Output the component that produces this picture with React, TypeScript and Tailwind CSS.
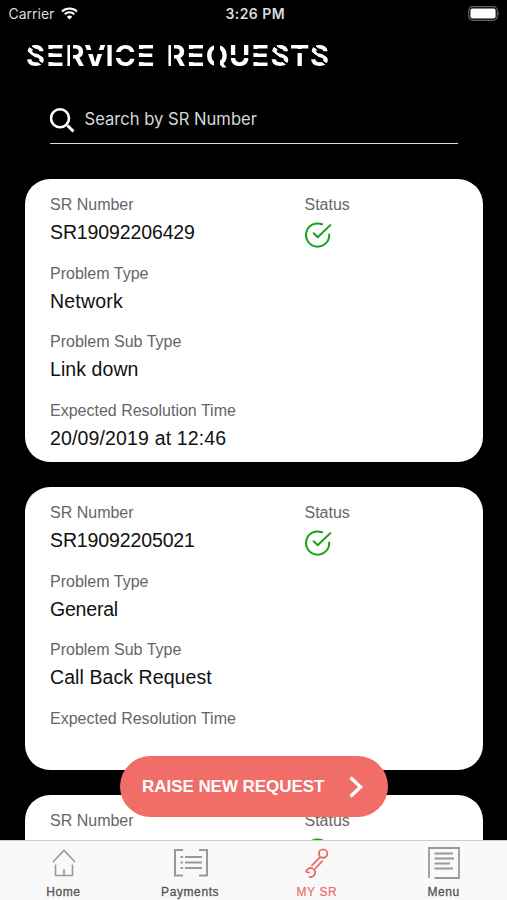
import React from "react";

type Letter = { char: string; cell: string; cut: string };

const SOLID = "bg-white";
const E_CUT =
  "bg-[linear-gradient(to_bottom,white_11px,transparent_11px,transparent_15.5px,white_15.5px,white_19.5px,transparent_19.5px,transparent_24px,white_24px)]";
const S_CUT =
  "bg-[linear-gradient(38deg,white_41%,transparent_42%,transparent_46%,white_47%,white_58%,transparent_59%,transparent_63%,white_64%)]";
const R_CUT =
  "bg-[linear-gradient(to_right,white_5.5px,transparent_5.5px,transparent_8.5px,white_8.5px)]";
const C_CUT =
  "bg-[linear-gradient(to_bottom,white_14px,transparent_14px,transparent_20px,white_20px)]";
const V_CUT =
  "bg-[linear-gradient(to_bottom,white_12px,transparent_12px,transparent_16px,white_16px)]";
const U_CUT =
  "bg-[linear-gradient(to_bottom,white_17px,transparent_17px,transparent_20.5px,white_20.5px)]";
const T_CUT =
  "bg-[linear-gradient(to_bottom,white_11px,transparent_11px,transparent_15px,white_15px)]";
const Q_CUT =
  "bg-[linear-gradient(to_right,white_8.5px,transparent_8.5px,transparent_14px,white_14px)]";

const S: Letter = { char: "S", cell: "w-[20px]", cut: S_CUT };
const E: Letter = { char: "E", cell: "w-[19.5px]", cut: E_CUT };
const R: Letter = { char: "R", cell: "w-[20px]", cut: R_CUT };

const words: Letter[][] = [
  [
    S,
    E,
    R,
    { char: "V", cell: "w-[20px]", cut: V_CUT },
    { char: "I", cell: "w-[9px]", cut: SOLID },
    { char: "C", cell: "w-[22px]", cut: C_CUT },
    E,
  ],
  [
    R,
    E,
    { char: "Q", cell: "w-[23px]", cut: Q_CUT },
    { char: "U", cell: "w-[22px]", cut: U_CUT },
    E,
    S,
    { char: "T", cell: "w-[19.5px]", cut: T_CUT },
    S,
  ],
];

function Heading() {
  return (
    <h1 className="flex h-[36px] gap-[10.5px] pl-[25.5px] font-['Inter',sans-serif] text-[29px] leading-[35px] font-bold">
      {words.map((word, i) => (
        <span key={i} className="flex">
          {word.map((l, j) => (
            <span key={j} className={`${l.cell} flex justify-center`}>
              <span className={`${l.cut} bg-clip-text text-transparent`}>{l.char}</span>
            </span>
          ))}
        </span>
      ))}
    </h1>
  );
}

function StatusBar() {
  return (
    <div className="grid h-[27px] shrink-0 grid-cols-3 items-center pr-[7px] pl-[8.5px] font-['Inter',sans-serif] text-[14px] text-[#dcdcdc]">
      <div className="flex items-center gap-[7px]">
        <span>Carrier</span>
        <svg width="17" height="13" viewBox="0 0 17 13" fill="none" stroke="white" strokeWidth="2.1">
          <path d="M1 4.5a10.8 10.8 0 0 1 15 0M3.7 7.3a6.8 6.8 0 0 1 9.6 0" />
          <path d="M8.5 12.6 5.8 9.8a3.9 3.9 0 0 1 5.4 0z" fill="white" stroke="none" />
        </svg>
      </div>
      <span className="pl-[2px] text-center font-semibold tracking-[0.45px]">3:26 PM</span>
      <svg className="justify-self-end" width="32" height="15" viewBox="0 0 32 15">
        <rect x="0.7" y="0.7" width="28.6" height="13.6" rx="4" fill="none" stroke="#666" strokeWidth="1.2" />
        <rect x="2.4" y="2.4" width="25.2" height="10.2" rx="2" fill="white" />
        <path d="M30.4 5.5q1.5 2 0 4z" fill="#777" />
      </svg>
    </div>
  );
}

function Check() {
  return (
    <svg className="mt-[7px]" width="27" height="27" viewBox="0.5 0 27 27" fill="none" stroke="#18a01b" strokeWidth="2" strokeLinecap="round" strokeLinejoin="round">
      <path d="M17.5 2.3A11.6 11.6 0 1 0 24.7 12.4" />
      <path d="m9.2 11.3 4 4L25.8 3.1" />
    </svg>
  );
}

const Label = ({ children }: { children: string }) => (
  <div className="text-[16px] leading-[20px] whitespace-nowrap text-[#666]">{children}</div>
);

function Field({ label, value, spacing = "tracking-[0.1px]" }: { label: string; value?: string; spacing?: string }) {
  return (
    <div className="h-[68.5px]">
      <Label>{label}</Label>
      {value && (
        <div className={`pt-[5px] text-[19.5px] leading-[24px] whitespace-nowrap text-[#111] ${spacing}`}>{value}</div>
      )}
    </div>
  );
}

type Request = { sr?: string; type?: string; sub?: string; time?: string };

function Card({ sr, type, sub, time }: Request) {
  return (
    <article className="h-[283px] shrink-0 rounded-[25px] bg-white pt-[16px] pl-[25px]">
      <div className="grid grid-cols-[254.5px_1fr]">
        <Field label="SR Number" value={sr} spacing="tracking-[-0.12px]" />
        <div>
          <Label>Status</Label>
          <Check />
        </div>
      </div>
      {type && (
        <>
          <Field label="Problem Type" value={type} spacing={type === "General" ? "tracking-[-0.2px]" : "tracking-[0.2px]"} />
          <Field label="Problem Sub Type" value={sub} spacing="tracking-[0.08px]" />
          <Field label="Expected Resolution Time" value={time} spacing="tracking-[0.15px]" />
        </>
      )}
    </article>
  );
}

const HomeIcon = (
  <svg className="ml-[2px]" width="24" height="30" viewBox="0 0 24 30" fill="none" stroke="#999" strokeWidth="1.6">
    <path d="m1 14 11-11.5L23 14M3.5 16.5v11h17v-11M12 27.5v-6.5" />
  </svg>
);
const PaymentsIcon = (
  <svg className="ml-[1px]" width="34" height="30" viewBox="0 0 34 30" fill="none" stroke="#999" strokeWidth="2">
    <path d="M9 2H1v25.5h8M25 2h8v25.5h-8" />
    <path d="M6.5 9H9M11 9h17M6.5 14.5H9M11 14.5h17M6.5 20H9M11 20h17" />
  </svg>
);
const WrenchIcon = (
  <svg width="24" height="31" viewBox="0 0 24 31" fill="none" stroke="#ee6c66" strokeWidth="1.9" strokeLinecap="round">
    <circle cx="18.1" cy="5.6" r="4.2" />
    <path d="m14.4 9.8-7.4 7.6M17.2 13.2l-6.6 7" />
    <path d="M4.6 28.9A4.5 4.5 0 1 0 1.2 23.6L3.9 24.6" />
  </svg>
);
const MenuIcon = (
  <svg width="32" height="32" viewBox="0.5 0 32 32" fill="none" stroke="#999" strokeWidth="1.8">
    <path d="M1.5 31V1h30v30H7" />
    <path d="M7 6.5h18.5M7 11.5h19.5M7 16.5h15.5M7 21.5h18.5" />
  </svg>
);

function Tab({ icon, label, active = false }: { icon: React.ReactNode; label: string; active?: boolean }) {
  return (
    <a className="flex flex-1 flex-col items-center">
      <span className="flex h-[44px] items-center">{icon}</span>
      <span className={`text-[12px] leading-[15px] tracking-[0.6px] ${active ? "text-[#ee6c66] [-webkit-text-stroke:0.2px_#ee6c66]" : "text-[#555] [-webkit-text-stroke:0.3px_#555]"}`}>
        {label}
      </span>
    </a>
  );
}

export default function App() {
  return (
    <div className="relative flex h-[900px] w-[507px] flex-col overflow-hidden bg-black font-['Liberation_Sans',Arial,sans-serif]">
      <StatusBar />
      <div className="shrink-0 pt-[11px]">
        <Heading />
      </div>
      <div className="mx-[49.5px] mt-[23.5px] flex h-[46px] shrink-0 items-center gap-[9px] border-b-[1.5px] border-[#ddd]">
        <svg width="26" height="26" viewBox="0.5 0 26 26" fill="none" stroke="white" strokeWidth="2.6">
          <circle cx="10.5" cy="11.3" r="9" />
          <path d="m18 18.5 6 6" strokeWidth="3" />
        </svg>
        <span className="-mt-[1px] font-['Inter',sans-serif] text-[16.6px] text-[#d6d6d6]">Search by SR Number</span>
      </div>
      <main className="flex min-h-0 flex-1 flex-col gap-[25px] overflow-hidden pt-[35.5px] pr-[24.5px] pl-[25px]">
        <Card sr="SR19092206429" type="Network" sub="Link down" time="20/09/2019 at 12:46" />
        <Card sr="SR19092205021" type="General" sub="Call Back Request" />
        <Card />
      </main>
      <nav className="flex h-[60px] shrink-0 border-t border-[#ccc] bg-[#f9f9f9]">
        <Tab icon={HomeIcon} label="Home" />
        <Tab icon={PaymentsIcon} label="Payments" />
        <Tab icon={WrenchIcon} label="MY SR" active />
        <Tab icon={MenuIcon} label="Menu" />
      </nav>
      <button className="absolute top-[756px] left-[120px] flex h-[61px] w-[268px] items-center justify-between rounded-full bg-[#f16d68] pr-[25px] pl-[22px] text-[17px] font-bold tracking-[-0.05px] whitespace-nowrap text-white">
        <span className="pt-[1px]">RAISE NEW REQUEST</span>
        <svg width="14" height="22" viewBox="0 0 14 22" fill="none" stroke="white" strokeWidth="3.4">
          <path d="m1.5 1.5 10 9.5-10 9.5" />
        </svg>
      </button>
    </div>
  );
}
